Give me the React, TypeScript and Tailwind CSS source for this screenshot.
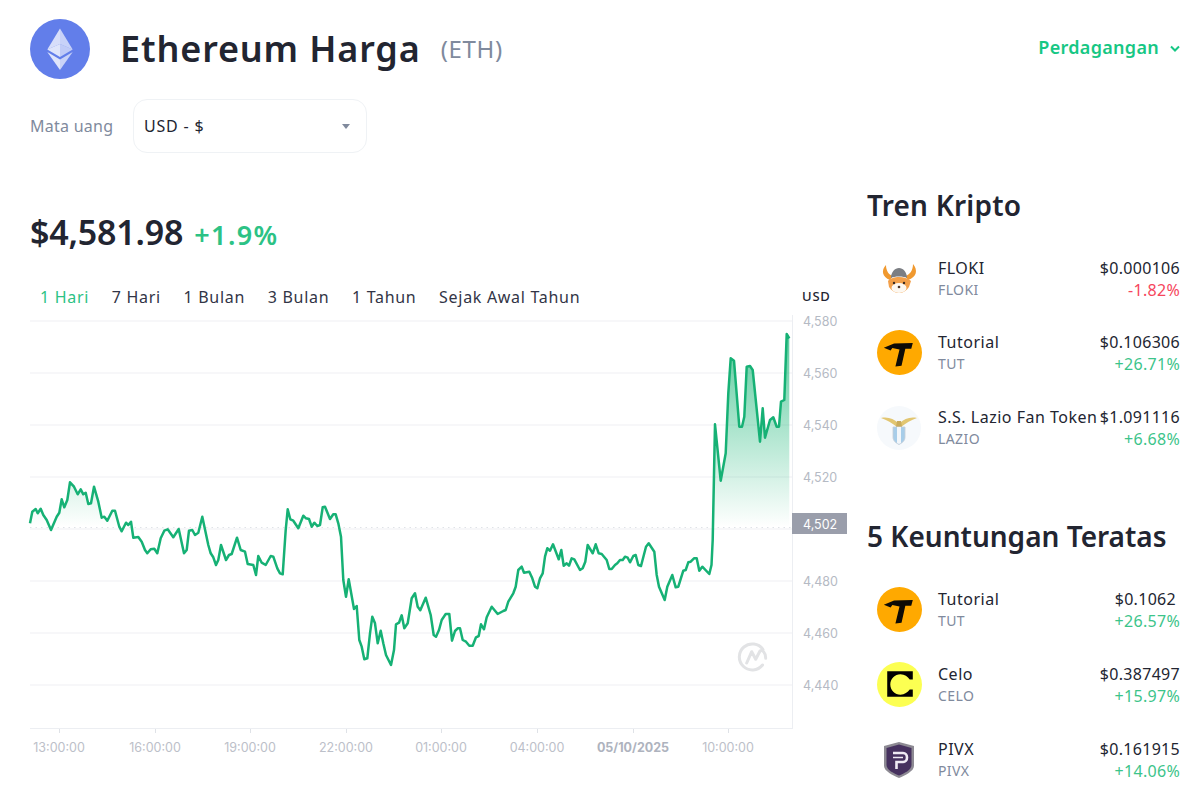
const LINE = "30,523.3 32.3,511.7 35.7,509 37.7,513.3 40.7,508.7 43.3,515 46.7,520 51,530 56.7,516.7 59.3,512.7 61.7,499.3 64.3,507.3 67.3,500 70,482.3 74,486.7 77.7,494.3 80.7,489.3 83.3,494.3 85.7,492.7 88.3,504 91,503.3 94,486.7 98.3,501.7 101.7,517.7 104.3,516.7 107.3,520.7 112.3,510.7 115,510.7 119.3,526.7 121.7,531.3 126,522.7 128.3,525 131,521.7 133.3,537.7 138.3,537 141.7,541.7 145,550 147.3,553.3 150.7,549.3 154.3,548.7 157.3,553.3 160.7,538.3 164.3,530.7 167.7,529.3 173.3,537.3 178.7,529 184,553.3 186.7,550 189,530.7 192.3,530 195,535 198.3,532.7 202.3,516.7 208.3,545 210.7,553.3 213.3,557.3 216,565 218.3,560 221,545 226,560 229,555 231.7,554 237,537.7 240.7,550 245,551.7 247.7,564 253.3,565 256,575 258.3,556 261.7,562.7 265.7,565 270.7,556 273.3,556.7 277.3,568.3 280,573.3 282.7,574.3 285.7,530 287.7,509.3 290.3,519.3 293.3,520.7 298.3,528.3 303.3,515.7 306,518.3 309,519 311.7,526.7 314.3,522.7 317.3,526 320,525 322.7,507.3 325,506.7 330,519 333.3,514.3 335.7,514.3 338.3,523.3 341,536.7 343.3,580 346,596.7 348.7,579.3 354,609 356.7,606 359.3,640 361.7,646.7 364.3,659.3 367.3,658.3 370,633.3 372.3,616.7 375,623.3 377.7,643.3 380.7,630.7 383.3,643.3 386,655 391,665 394,650 396,624.3 399,622.7 401.7,615.3 404.3,628.3 407.7,623.3 411.7,598.3 415,593.3 417.7,606.7 420.3,610.3 425.7,597.7 430.7,615 433.7,635 436,636.7 439,630 441.7,620 445.7,614 449.3,614 452,640.7 455,631 457.7,628.3 460,628.3 462.7,640 466,641.7 469.3,645.7 472.7,645.7 476,637.3 478.7,636 481,624.3 484,629.3 486.7,617.3 491.7,606.7 497.7,614 503.3,611 505.7,610 508.3,601.7 513.3,593.3 515.7,586.7 518.3,570 521.7,566.7 524,572.7 529.3,571.7 532.3,578.3 535,586.7 537.3,588.3 540,578.3 542.7,573.3 545,556.7 547.3,548.3 550,550.7 553,544.3 558.7,559.3 561.3,550 563.7,565.7 566.7,563.3 569,565.7 571.7,558.3 574.3,559.3 580,570 582.7,568.3 585.3,561.7 587.7,545 592.7,553.3 595.7,544.3 598.7,553.3 601.7,554 606.7,560 609.3,569 611.7,569 615,565 617.3,563.3 620,560 622.7,560 625,556.7 627.7,557.7 630,562.3 633.3,556 635.7,555 638.3,565 641,566 646,546.7 648.7,543.3 654.3,551.7 656.7,575 659,586.7 664.7,600 667.3,586.7 672.3,575 675.7,587.3 678.3,586.7 683.3,570.7 685.7,570 688.3,562.3 690.7,561.7 694,558.3 696.7,558.3 699.3,570.7 702.3,566.7 709.3,574 711.5,565 712.7,540 715,424.3 720.7,480.7 725.7,453.3 728.3,393.3 730.7,358.3 734,360.7 739.3,426.7 742,426.7 744.3,416.7 746.7,366.7 750,366 752.7,370 760,441.7 762.7,408.3 765,437.7 770,420 773.3,417.3 776.7,426.7 779,426.7 781,401.7 784.3,400 786.7,334 789.3,338.3";

const FONT = "font-['Noto_Sans',sans-serif]";

function EthLogo() {
  return (
    <svg width="60" height="60" viewBox="0 0 60 60" className="shrink-0">
      <circle cx="30" cy="30" r="30" fill="#627eea" />
      <path d="M30 9.500V25L17.300 30.600Z" fill="#fff" fillOpacity=".75" />
      <path d="M30 9.500V25L42.700 30.600Z" fill="#fff" fillOpacity=".65" />
      <path d="M17.300 30.600L30 25V38Z" fill="#fff" fillOpacity=".8" />
      <path d="M42.700 30.600L30 25V38Z" fill="#fff" fillOpacity=".6" />
      <path d="M17.300 33L30 40.500V51Z" fill="#fff" fillOpacity=".8" />
      <path d="M42.700 33L30 40.500V51Z" fill="#fff" fillOpacity=".65" />
    </svg>
  );
}

function Floki() {
  return (
    <svg width="44" height="44" viewBox="0 0 44 44" className="block">
      <path d="M9 8C4 13 5 20 13 23L16 19C12 18 9 14 9 8Z" fill="#f0992f" />
      <path d="M36 7C41 13 40 20 31 23L28 19C33 18 36 13 36 7Z" fill="#f0992f" />
      <path d="M11 24C13 21 18 20 22 20C26 20 31 21 34 24L32 30C29 34 26 36 22 36C18 36 15 34 12 30Z" fill="#f3a04a" />
      <ellipse cx="22" cy="31" rx="7.500" ry="5" fill="#fdf8f1" />
      <path d="M14 21C14 15 18 11 22 11C26 11 30 15 30 21C27 19 17 19 14 21Z" fill="#7b7e83" />
      <circle cx="17" cy="26" r="1.200" fill="#3a2a20" />
      <circle cx="27" cy="26" r="1.200" fill="#3a2a20" />
      <circle cx="22" cy="30" r="1.300" fill="#4a3428" />
    </svg>
  );
}

function Tut() {
  return (
    <svg width="45" height="45" viewBox="0 0 44 44" className="block -mt-px">
      <circle cx="22" cy="22" r="22" fill="#ffa900" />
      <path d="M6.700 17.300L16.700 13.300L35 12.700L33.500 18.300H27.700L24 35L18 35.700L22 19L15 17.700L13.300 20Z" fill="#0d0b06" />
    </svg>
  );
}

function Lazio() {
  return (
    <svg width="44" height="44" viewBox="0 0 44 44" className="block">
      <circle cx="22" cy="22" r="22" fill="#f6f9fc" />
      <path d="M4 12C11 10.500 17 13 21 17L20 21C15 17 10 14 4 12Z" fill="#e2c671" />
      <path d="M40 12C33 10.500 27 13 23 17L24 21C29 17 34 14 40 12Z" fill="#e2c671" />
      <path d="M20 15L24 15L25 21H19Z" fill="#c9ab5c" />
      <path d="M16 21H28V31C28 35 25 37 22 38.500C19 37 16 35 16 31Z" fill="#a7cde9" stroke="#c7ced6" strokeWidth=".8" />
      <path d="M20 21H24V37L22 38L20 37Z" fill="#f2f6fa" />
    </svg>
  );
}

function Celo() {
  return (
    <svg width="45" height="45" viewBox="0 0 44 44" className="block -mt-px">
      <circle cx="22" cy="22" r="22" fill="#fcff52" />
      <path d="M10 9H35V17H32C30 14.500 27 12 23 12C17.500 12 13 16.500 13 22C13 27.500 17.500 32 23 32C27 32 30 29.500 32 27H35V34H10Z" fill="#000" />
    </svg>
  );
}

function Pivx() {
  return (
    <svg width="44" height="44" viewBox="0 0 44 44" className="block">
      <path d="M22 4L37 8V28C37 33 28 37.500 22 40C16 37.500 7 33 7 28V8Z" fill="#8d8a93" />
      <path d="M22 6.500L34.500 10V27C34.500 32 27 35.500 22 37.500C17 35.500 9.500 32 9.500 27V10Z" fill="#46315f" />
      <path d="M16 15H26C28.500 15 30 17 30 19.500C30 22 28.500 24 26 24H19.500V31" fill="none" stroke="#efeaf4" strokeWidth="2.600" />
      <path d="M16 19.500H26" stroke="#efeaf4" strokeWidth="1.500" />
    </svg>
  );
}

type Row = { icon: React.ReactNode; name: string; sym: string; price: string; pct: string; up: boolean; mt: string; pr?: string };

function CoinRow({ r }: { r: Row }) {
  return (
    <div className={`flex h-11 pl-[10px] ${r.mt}`}>
      <div className="w-11 h-11 shrink-0">{r.icon}</div>
      <div className="ml-[17px] flex-1 min-w-0 whitespace-nowrap">
        <div className="text-[16px] leading-[22px] tracking-[0.5px] text-[#222531]">{r.name}</div>
        <div className="text-[14px] leading-[22px] tracking-[0.4px] text-[#808a9d]">{r.sym}</div>
      </div>
      <div className="text-right whitespace-nowrap">
        <div className={`text-[16px] leading-[22px] tracking-[0.3px] text-[#222531] ${r.pr ?? ""}`}>{r.price}</div>
        <div className={`text-[16px] leading-[22px] tracking-[0.3px] ${r.up ? "text-[#3cc48a]" : "text-[#f6465d]"}`}>{r.pct}</div>
      </div>
    </div>
  );
}

function Chart() {
  const grid = [321, 373, 425, 477, 529, 581, 633, 685];
  const labels: [number, string][] = [[321, "4,580"], [373, "4,560"], [425, "4,540"], [477, "4,520"], [581, "4,480"], [633, "4,460"], [685, "4,440"]];
  const times: [number, string, boolean][] = [[59, "13:00:00", false], [155, "16:00:00", false], [250, "19:00:00", false], [346, "22:00:00", false], [441, "01:00:00", false], [537, "04:00:00", false], [633, "05/10/2025", true], [728, "10:00:00", false]];
  return (
    <svg width="847" height="479" viewBox="0 310 847 479" className="block" fontFamily="'Inter',sans-serif">
      <defs>
        <linearGradient id="g" gradientUnits="userSpaceOnUse" x1="0" y1="334" x2="0" y2="527">
          <stop offset="0" stopColor="#16b575" stopOpacity=".7" />
          <stop offset="1" stopColor="#16b575" stopOpacity="0" />
        </linearGradient>
        <clipPath id="above"><rect x="30" y="310" width="760" height="217.5" /></clipPath>
      </defs>
      {grid.map((y) => <line key={y} x1="30" x2="792" y1={y} y2={y} stroke="#f4f5f7" strokeWidth="1.5" />)}
      <line x1="792.5" x2="792.5" y1="315" y2="729" stroke="#eceef2" />
      <line x1="30" x2="792" y1="728.5" y2="728.5" stroke="#eceef2" />
      <line x1="30" x2="792" y1="527.5" y2="527.5" stroke="#dfe2e7" strokeDasharray="1.5 4" />
      {times.map(([x]) => <line key={x} x1={x + 0.5} x2={x + 0.5} y1="729" y2="733" stroke="#dfe2e7" />)}
      <polygon points={`30,527.5 ${LINE} 789.3,527.5`} fill="url(#g)" clipPath="url(#above)" />
      <polyline points={LINE} fill="none" stroke="#16b175" strokeWidth="2.5" strokeLinejoin="round" />
      {labels.map(([y, t]) => <text key={t} x="803" y={y + 4.5} fontSize="12.5" fill="#b5bac4">{t}</text>)}
      <rect x="792" y="513" width="55" height="21" fill="#9a9eab" />
      <text x="803" y="528.5" fontSize="12.5" fill="#fff">4,502</text>
      {times.map(([x, t, b]) => <text key={x} x={x} y="752" textAnchor="middle" fontSize="12.5" fontWeight={b ? 700 : 400} fill={b ? "#aeb3be" : "#bcc0c9"}>{t}</text>)}
      <g fill="none" stroke="#e2e3e5" strokeWidth="3" strokeLinecap="round" strokeLinejoin="round">
        <path d="M762.500 665A13 13 0 1 1 763 649.500" />
        <path d="M746.700 663L751.700 651.700L755.700 659.300L760 651C762 649.500 765.700 652 765.700 658.300" />
      </g>
    </svg>
  );
}

export default function App() {
  const tabs = ["7 Hari", "1 Bulan", "3 Bulan", "1 Tahun", "Sejak Awal Tahun"];
  const r1: Row[] = [
    { icon: <Floki />, name: "FLOKI", sym: "FLOKI", price: "$0.000106", pct: "-1.82%", up: false, mt: "" },
    { icon: <Tut />, name: "Tutorial", sym: "TUT", price: "$0.106306", pct: "+26.71%", up: true, mt: "mt-[30px]" },
    { icon: <Lazio />, name: "S.S. Lazio Fan Token", sym: "LAZIO", price: "$1.091116", pct: "+6.68%", up: true, mt: "mt-[31px]" },
  ];
  const r2: Row[] = [
    { icon: <Tut />, name: "Tutorial", sym: "TUT", price: "$0.1062", pct: "+26.57%", up: true, mt: "", pr: "pr-[4px]" },
    { icon: <Celo />, name: "Celo", sym: "CELO", price: "$0.387497", pct: "+15.97%", up: true, mt: "mt-[31px]" },
    { icon: <Pivx />, name: "PIVX", sym: "PIVX", price: "$0.161915", pct: "+14.06%", up: true, mt: "mt-[31px]" },
  ];
  return (
    <div className={`${FONT} w-[1197px] h-[789px] overflow-hidden bg-white text-[#222531]`}>
      <div className="flex items-start pl-[30px] pr-[17px] pt-[19px]">
        <EthLogo />
        <div className="ml-[30px] text-[36px] leading-[60px] tracking-[0.85px] font-semibold">Ethereum Harga</div>
        <div className="ml-[20px] text-[24px] leading-[60px] tracking-[0.7px] text-[#808a9d]">(ETH)</div>
        <div className="ml-auto flex items-center h-[56px] text-[#16c784] text-[18px] tracking-[0.3px] font-semibold">
          Perdagangan
          <svg width="10" height="7" viewBox="0 0 10 7" className="ml-[11px] mt-[2px]"><path d="M1 1.5L5 5.5L9 1.5" fill="none" stroke="#16c784" strokeWidth="2" /></svg>
        </div>
      </div>
      <div className="flex items-center pl-[30px] mt-[20px]">
        <div className="w-[103px] text-[16px] tracking-[0.25px] text-[#808a9d]">Mata uang</div>
        <div className="w-[234px] h-[54px] rounded-[14px] border border-[#eff2f5] flex items-center px-[10px] text-[16px] tracking-[0.8px]">
          USD - $
          <span className="ml-auto mr-[6px] w-0 h-0 border-x-[4px] border-x-transparent border-t-[5px] border-t-[#808a9d]" />
        </div>
      </div>
      <div className="flex">
        <div className="w-[867px] shrink-0">
          <div className="flex items-baseline pl-[30px] mt-[56px] h-[46px]">
            <span className="text-[34px] leading-[46px] tracking-[-0.2px] font-semibold">$4,581.98</span>
            <span className="ml-[11px] text-[27px] leading-[46px] tracking-[1.4px] font-semibold text-[#2cc285]">+1.9%</span>
          </div>
          <div className="relative h-[29px] mt-[26px] pt-[4px]">
            <div className="flex pl-[40px] text-[16px] leading-[25px] tracking-[0.7px] gap-[22.7px]">
              <span className="text-[#2cc285]">1 Hari</span>
              {tabs.map((t) => <span key={t} className="text-[#323546]">{t}</span>)}
            </div>
            <span className="absolute left-[802px] top-[3px] text-[13px] leading-[24px] tracking-[0.8px] font-medium">USD</span>
          </div>
          <Chart />
        </div>
        <div className="w-[313px] shrink-0 mt-[27px]">
          <h2 className="text-[28px] leading-[50px] tracking-[0.2px] font-semibold">Tren Kripto</h2>
          <div className="mt-[27px]">{r1.map((r) => <CoinRow key={r.name} r={r} />)}</div>
          <h2 className="mt-[61px] text-[28px] leading-[50px] font-semibold">5 Keuntungan Teratas</h2>
          <div className="mt-[27px]">{r2.map((r) => <CoinRow key={r.name} r={r} />)}</div>
        </div>
      </div>
    </div>
  );
}
